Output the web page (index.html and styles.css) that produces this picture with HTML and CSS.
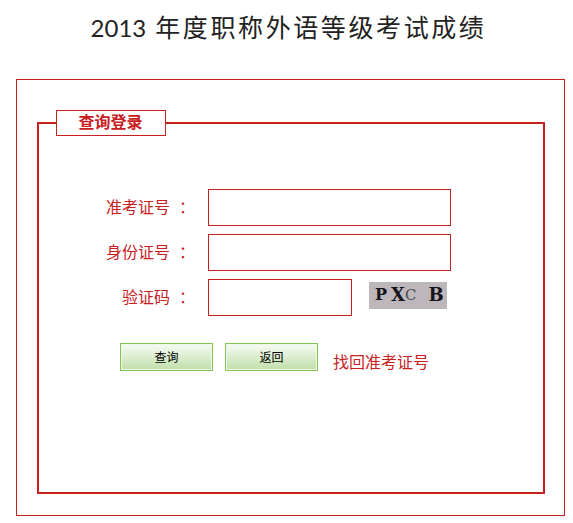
FILE: index.html
```html
<!DOCTYPE html>
<html lang="zh-CN">
<head>
<meta charset="utf-8">
<title>2013年度职称外语等级考试成绩</title>
<link rel="stylesheet" href="styles.css">
</head>
<body>
<h1 class="title"><span class="year">2013</span>年度职称外语等级考试成绩</h1>
<div class="outer">
  <fieldset class="panel">
    <legend class="panel-legend">查询登录</legend>
    <form class="form">
      <div class="row">
        <label class="label">准考证号<span class="colon">：</span></label>
        <input class="field" type="text">
      </div>
      <div class="row">
        <label class="label">身份证号<span class="colon">：</span></label>
        <input class="field" type="text">
      </div>
      <div class="row">
        <label class="label">验证码<span class="colon">：</span></label>
        <input class="field field-short" type="text">
        <div class="captcha"><span>P</span><span class="x">X</span><span class="c">C</span><span class="b">B</span></div>
      </div>
      <div class="actions">
        <button class="btn" type="button">查询</button>
        <button class="btn" type="button">返回</button>
        <a class="find" href="#">找回准考证号</a>
      </div>
    </form>
  </fieldset>
</div>
</body>
</html>
```
FILE: styles.css
```css
* { box-sizing: border-box; }
html, body { margin: 0; padding: 0; background: #fff; }
body { font-family: "Noto Sans CJK SC", "Liberation Sans", sans-serif; }

.title {
  margin: 0;
  height: 79px;
  padding: 9px 0 0 4px;
  text-align: center;
  font-family: "Lato", "Noto Sans CJK SC", sans-serif;
  font-weight: 400;
  font-size: 25px;
  line-height: 36px;
  letter-spacing: 2.6px;
  color: #222;
}
.year { font-size: 24px; letter-spacing: 0; margin-right: 9px; }

.outer {
  width: 549px;
  height: 437px;
  margin-left: 16px;
  border: 1px solid #c9201f;
  padding: 30px 0 0 20px;
}

.panel {
  width: 508px;
  height: 384px;
  margin: 0;
  padding: 0 0 0 15px;
  border: 2px solid #c9201f;
}
.panel-legend {
  display: flex;
  align-items: center;
  justify-content: center;
  width: 110px;
  height: 26px;
  margin: 0 2px;
  padding: 0 1px 5px 0;
  border: 1px solid #c9201f;
  background: #fff;
  font-family: "Noto Sans CJK SC", "Liberation Serif", serif;
  font-weight: 700;
  font-size: 16px;
  line-height: 20px;
  color: #c9201f;
}

.form {
  display: flex;
  flex-direction: column;
  gap: 8px;
  padding: 53px 0 0 0;
  margin-left: -14px;
}
.row {
  display: flex;
  align-items: center;
  height: 37px;
}
.label {
  width: 155px;
  margin-right: 13px;
  padding-bottom: 4px;
  text-align: right;
  font-size: 16px;
  color: #c9201f;
}
.colon { margin-left: 9px; }
.field {
  width: 243px;
  height: 37px;
  padding: 0 4px;
  border: 1px solid #c9201f;
  border-radius: 0;
  background: #fff;
  outline: none;
}
.field-short { width: 144px; }

.captcha {
  display: flex;
  align-items: center;
  align-self: flex-start;
  width: 78px;
  height: 27px;
  margin: 3px 0 0 17px;
  padding: 0 0 2px 6px;
  background: #bdb6ba;
  font-family: "DejaVu Serif", serif;
  font-weight: 700;
  font-size: 16px;
  color: #16141a;
}
.captcha .x { font-size: 18px; margin-left: 4px; }
.captcha .c { font-weight: 400; font-size: 15px; color: #4c4a4e; margin-left: 0; }
.captcha .b { font-size: 18px; margin-left: 12px; }

.actions {
  display: flex;
  align-items: center;
  padding: 19px 0 0 80px;
}
.btn {
  width: 93px;
  height: 28px;
  margin-right: 12px;
  padding: 0 0 2px;
  border: 1px solid #84c455;
  box-shadow: inset 0 0 0 1px #eef6e8;
  border-radius: 0;
  background: linear-gradient(#f8fbf5, #c0dfa9);
  font-family: "Noto Sans CJK SC", sans-serif;
  font-size: 12px;
  color: #000;
}
.find {
  margin: 8px 0 0 3px;
  font-size: 16px;
  line-height: 18px;
  color: #c9201f;
  text-decoration: none;
}
```
